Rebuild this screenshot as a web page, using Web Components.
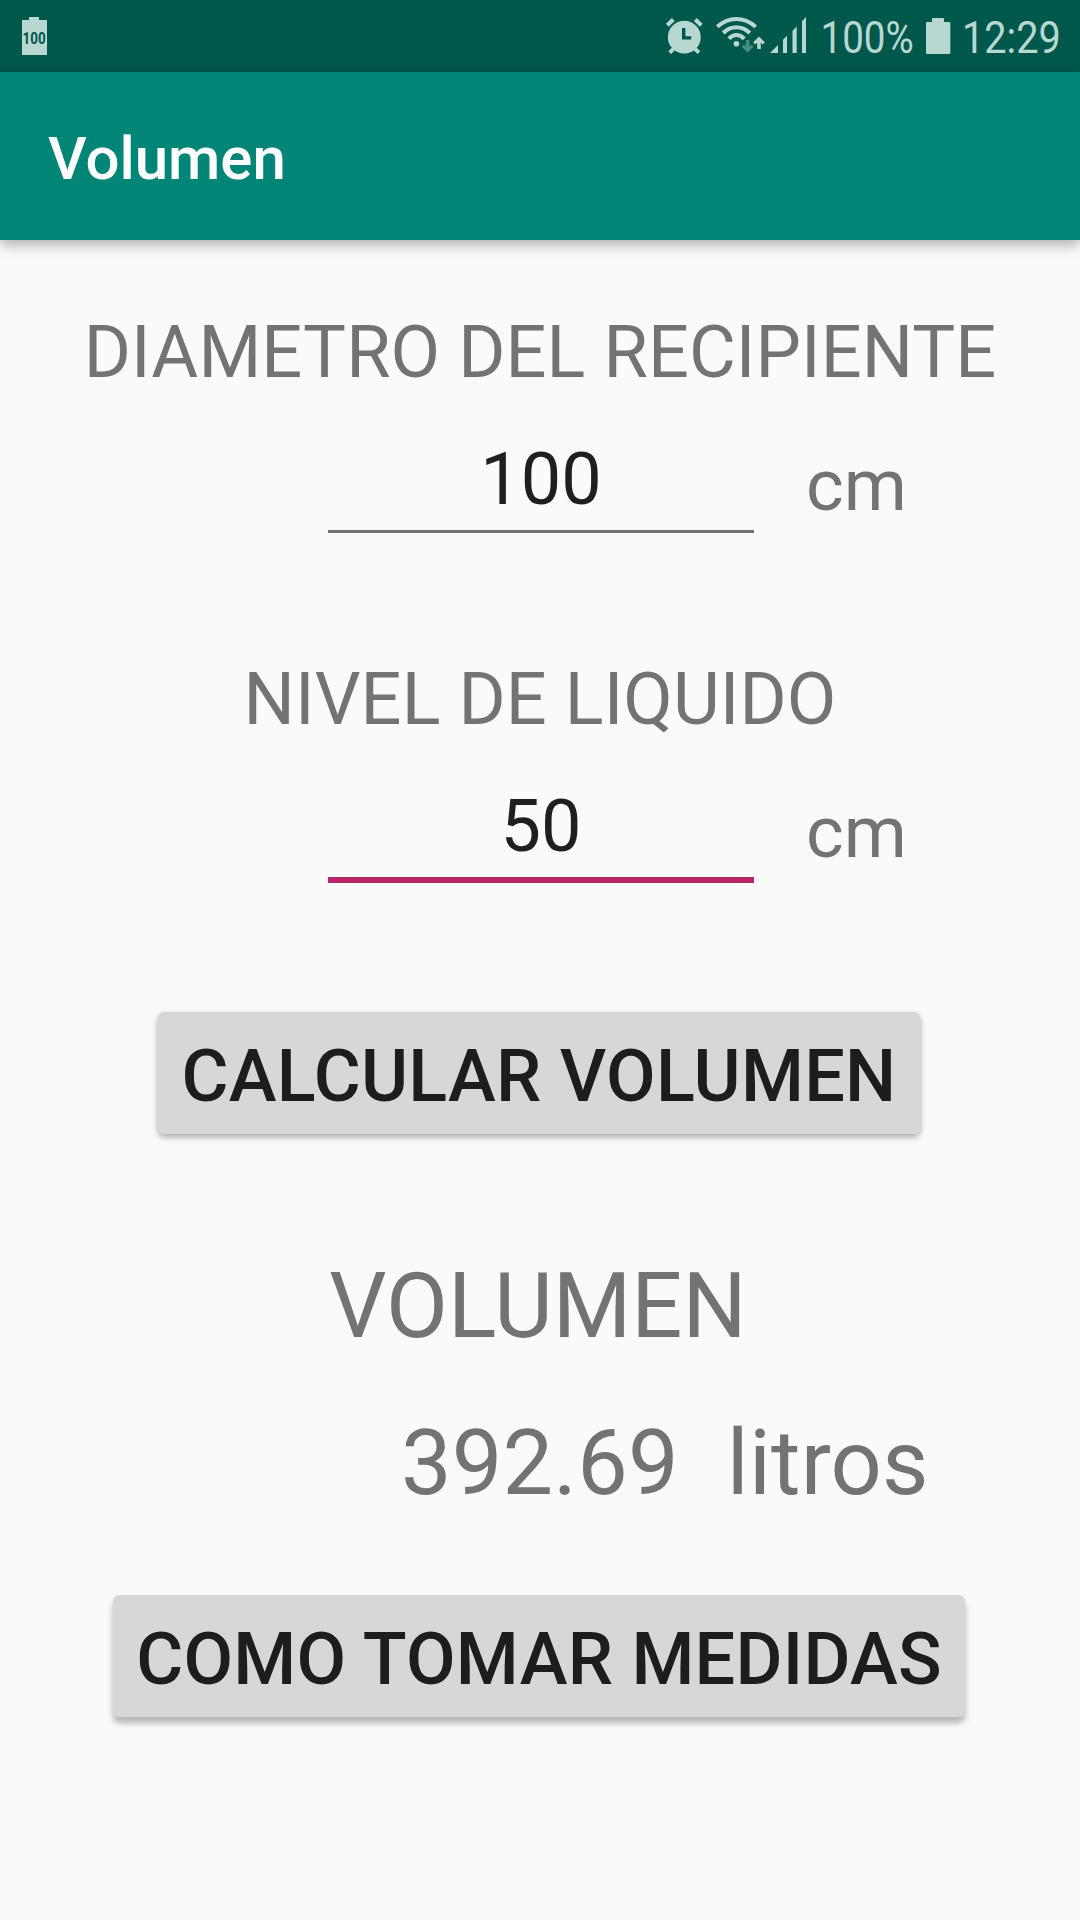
<!DOCTYPE html>
<html lang="es">
<head>
<meta charset="utf-8">
<title>Volumen</title>
<style>
  html, body {
    margin: 0;
    height: 100%;
    overflow: hidden;
    background: #fafafa;
    font-family: Roboto, "Liberation Sans", sans-serif;
  }
</style>
</head>
<body>
<volumen-app></volumen-app>

<script>
// Clase base: cada componente define getStyles() y getMarkup()
class BaseElement extends HTMLElement {
  constructor() {
    super();
    this.attachShadow({ mode: 'open' });
  }

  connectedCallback() {
    this.render();
  }

  getStyles() { return ''; }
  getMarkup() { return '<slot></slot>'; }

  render() {
    const template = document.createElement('template');
    template.innerHTML = `<style>${this.getStyles()}</style>${this.getMarkup()}`;
    this.shadowRoot.replaceChildren(template.content.cloneNode(true));
  }
}

class StatusBar extends BaseElement {
  getStyles() {
    return `
      :host {
        display: flex;
        justify-content: space-between;
        height: 72px;
        background: #00574b;
        color: #b7d7d1;
      }
      svg { display: block; overflow: visible; fill: currentColor; }
      .group { display: flex; }
      .group.left { padding-left: 22px; }
      .group.right { padding-right: 16px; }
      text { font-family: Roboto, sans-serif; font-size: 45px; }
      .level { font-size: 16.4px; font-weight: 700; fill: #00574b; }
      .line { fill: none; stroke: currentColor; }
    `;
  }

  getMarkup() {
    return `
      <div class="group left">
        <svg width="26" height="72" viewBox="22 0 26 72">
          <path d="M29 17h10v3h8v35H22V20h7z"/>
          <text class="level" transform="translate(22.6 44) scale(0.82 1)">100</text>
        </svg>
      </div>
      <div class="group right">
        <svg width="48" height="72" viewBox="664 0 48 72">
          <circle cx="684.3" cy="37.2" r="16.4"/>
          <path class="line" stroke-width="4" d="M667.3 25.3l6-5.8M701.3 25.3l-6-5.8"/>
          <path class="line" stroke-width="4" d="M669.7 52.7l4-4M698.9 52.7l-4-4"/>
          <path d="M682 28h3.4v8.2h5.8v3.2H682z" fill="#00574b"/>
        </svg>
        <svg width="56" height="72" viewBox="712 0 56 72">
          <g class="line" stroke-width="4">
            <path d="M717.3 26.8Q726 19 736.4 19T755.7 26.8"/>
            <path d="M723.2 33Q729 27.2 736.4 27.2T749.8 33"/>
            <path d="M729 38.8Q732 35 736.4 35T744.2 38.8"/>
          </g>
          <circle cx="736.4" cy="43.8" r="2.8"/>
          <path opacity=".4" d="M745.8 40h3.6v6.5l2-1.9 2 2.1-5.8 5.8-5.8-5.8 2-2.1 2 1.9z"/>
          <path d="M757.2 49h3.6v-6.5l2 1.9 2-2.1-5.8-5.8-5.8 5.8 2 2.1 2-1.9z"/>
        </svg>
        <svg width="50" height="72" viewBox="768 0 50 72">
          <path d="M770 53l8-8v8zM783 53V39.8l4-4V53zM792.5 53V30.8l4.2-4.2V53zM802 53V21.3l4-4.3v36z"/>
        </svg>
        <svg width="104" height="72" viewBox="818 0 104 72">
          <text transform="translate(820.5 53) scale(0.856 1)">100%</text>
        </svg>
        <svg width="36" height="72" viewBox="922 0 36 72">
          <path d="M932 22v-3q0-1 1-1h10q1 0 1 1v3h5q1.3 0 1.3 1.3V52.7q0 1.3-1.3 1.3H927.3q-1.3 0-1.3-1.3V23.3q0-1.3 1.3-1.3z"/>
        </svg>
        <svg width="106" height="72" viewBox="958 0 106 72">
          <text transform="translate(962 53) scale(0.882 1)">12:29</text>
        </svg>
      </div>
    `;
  }
}

class AppBar extends BaseElement {
  getStyles() {
    return `
      :host {
        display: flex;
        align-items: center;
        box-sizing: border-box;
        height: 168px;
        padding: 4px 48px 0;
        background: #008577;
        color: #fff;
        font-size: 60px;
        font-weight: 500;
        line-height: 71px;
        box-shadow: 0 5px 12px rgba(0, 0, 0, 0.3);
      }
    `;
  }
}

class TextLabel extends BaseElement {
  getStyles() {
    return `
      :host {
        display: block;
        color: #737373;
        font-size: 72px;
        line-height: 85px;
        letter-spacing: 0.1px;
        text-align: center;
        white-space: nowrap;
      }
      :host([size="large"]) {
        font-size: 90px;
        line-height: 106px;
      }
    `;
  }
}

class NumberField extends BaseElement {
  getStyles() {
    return `
      :host {
        display: grid;
        grid-template-columns: 426px auto;
        column-gap: 52px;
        align-items: start;
        margin-left: 328px;
        height: 106px;
        font-size: 72px;
        line-height: 85px;
      }
      .input {
        box-sizing: border-box;
        height: 96px;
        border-bottom: 3px solid #737373;
        color: #1f1f1f;
        text-align: center;
      }
      :host([focused]) .input {
        height: 99px;
        border-bottom: 6px solid #bc2566;
      }
      .unit {
        margin-top: 6px;
        color: #737373;
      }
    `;
  }

  getMarkup() {
    return `
      <div class="input"><slot></slot></div>
      <div class="unit">${this.getAttribute('unit')}</div>
    `;
  }
}

class RaisedButton extends BaseElement {
  getStyles() {
    return `
      :host { display: block; }
      button {
        display: block;
        box-sizing: border-box;
        width: 100%;
        height: 122px;
        margin: 0;
        padding: 7px 0 0;
        border: 0;
        border-radius: 6px;
        background: #d6d8d7;
        color: #1c1d1d;
        font: 500 72px/85px Roboto, sans-serif;
        letter-spacing: 0.25px;
        white-space: nowrap;
        box-shadow: 0 3px 6px rgba(0, 0, 0, 0.33);
      }
      :host([raised]) button {
        box-shadow: 0 6px 6px rgba(0, 0, 0, 0.28);
      }
    `;
  }

  getMarkup() {
    return '<button type="button"><slot></slot></button>';
  }
}

class VolumenApp extends BaseElement {
  getStyles() {
    return `
      :host { display: block; height: 1920px; background: #fafafa; }
      main { display: flex; flex-direction: column; padding-top: 70px; }
      number-field { margin-top: 42px; }
      .level { margin-top: 114px; }
      .calc { width: 762px; margin: 122px 0 0 158px; }
      .title { margin: 120px 4px 0 0; }
      .result { display: flex; gap: 48px; margin: 51px 0 0 401px; }
      .result text-label { letter-spacing: 0.2px; }
      .help { width: 852px; margin: 78px 0 0 113px; }
    `;
  }

  getMarkup() {
    return `
      <status-bar></status-bar>
      <app-bar>Volumen</app-bar>
      <main>
        <text-label>DIAMETRO DEL RECIPIENTE</text-label>
        <number-field unit="cm">100</number-field>
        <text-label class="level">NIVEL DE LIQUIDO</text-label>
        <number-field unit="cm" focused>50</number-field>
        <raised-button class="calc">CALCULAR VOLUMEN</raised-button>
        <text-label class="title" size="large">VOLUMEN</text-label>
        <div class="result">
          <text-label size="large">392.69</text-label>
          <text-label size="large">litros</text-label>
        </div>
        <raised-button class="help" raised>COMO TOMAR MEDIDAS</raised-button>
      </main>
    `;
  }
}

customElements.define('status-bar', StatusBar);
customElements.define('app-bar', AppBar);
customElements.define('text-label', TextLabel);
customElements.define('number-field', NumberField);
customElements.define('raised-button', RaisedButton);
customElements.define('volumen-app', VolumenApp);
</script>
</body>
</html>
